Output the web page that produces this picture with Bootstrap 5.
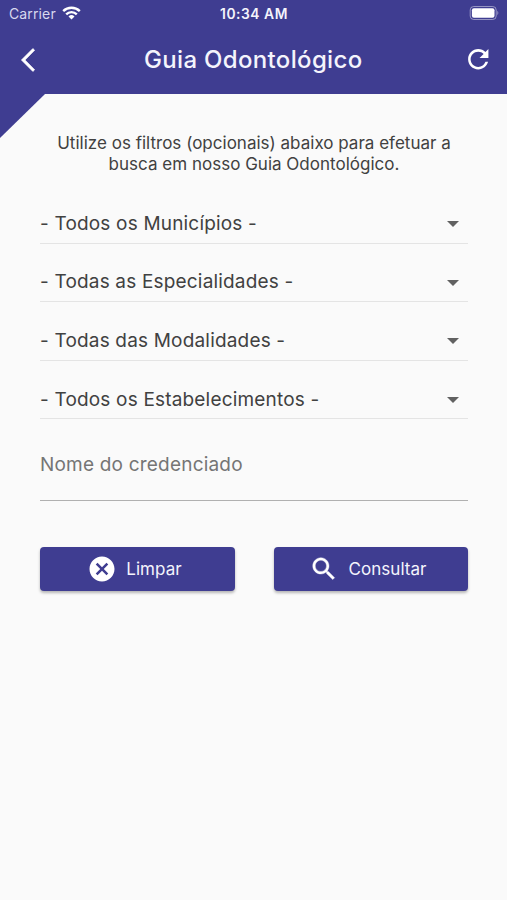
<!DOCTYPE html>
<html lang="pt-BR">
<head>
<meta charset="utf-8">
<meta name="viewport" content="width=device-width, initial-scale=1">
<title>Guia Odontológico</title>
<link href="https://cdn.jsdelivr.net/npm/bootstrap@5.3.0/dist/css/bootstrap.min.css" rel="stylesheet">
<style>
  :root { --brand: #3f3d91; }
  body { background: #fafafa; font-family: Inter, "Liberation Sans", sans-serif; color: #414141; min-height: 900px; overflow: hidden; }
  .app-header { background: var(--brand); height: 94px; color: #f4f4fc; }
  .status-bar { height: 27px; padding: 0 8px 0 9px; }
  .status-side { flex: 1 1 0; gap: 6px; }
  .status-side svg { margin-bottom: 1px; }
  .carrier { font-size: 14px; letter-spacing: .13px; color: #d8d8ee; }
  .clock { font-size: 13.8px; font-weight: 600; letter-spacing: .55px; padding-top: 1px; }
  .title-bar { height: 65px; padding: 0 13px 0 21px; }
  .title-bar h1 { font-size: 24px; font-weight: 500; letter-spacing: .33px; line-height: 1; padding-left: 8px; padding-top: 1px; }
  .corner { width: 45px; height: 44px; background: var(--brand); clip-path: polygon(0 0, 100% 0, 0 100%); }
  .content { padding: 0 39px 0 40px; margin-top: -5px; }
  .intro { font-size: 17px; line-height: 20.6px; letter-spacing: .01px; }
  .filters { padding-top: 31.4px; }
  .filter { height: 58.6px; }
  .filter-row { height: 38px; border-bottom: 1.4px solid #e4e4e4; font-size: 19px; letter-spacing: .18px; padding-right: 9px; }
  .name-field { height: 61px; border: 0; border-bottom: 1.5px solid #b0b0b0; border-radius: 0; background: transparent; font-size: 19px; letter-spacing: .2px; padding: 0 0 10px; }
  .name-field::placeholder { color: #757575; opacity: 1; }
  .action { --bs-btn-color: #f4f4fc; --bs-btn-bg: var(--brand); --bs-btn-hover-bg: #35337f; --bs-btn-hover-color: #fff; height: 44px; border: 0; border-radius: 4px; font-size: 17px; letter-spacing: .06px; box-shadow: 0 2px 3px rgba(0,0,0,.28); padding: 0 6px 0 0; gap: 9.5px; }
  .action span { padding-top: 1px; }
  .actions { gap: 39px; margin-top: 46px; }
</style>
<script src="https://cdn.jsdelivr.net/npm/bootstrap@5.3.0/dist/js/bootstrap.bundle.min.js"></script>
</head>
<body>
<header class="app-header">
  <div class="status-bar d-flex align-items-center">
    <div class="status-side d-flex align-items-center">
      <span class="carrier">Carrier</span>
      <svg width="19" height="14" viewBox="0 0 19 14" fill="none" stroke="#fff" stroke-width="2.4" aria-hidden="true">
        <path d="M1.2 5.1a11.8 11.8 0 0 1 16.6 0"/>
        <path d="M4.2 8.3a7.5 7.5 0 0 1 10.6 0"/>
        <path d="M9.5 13.6 6.5 10.5a4.3 4.3 0 0 1 6 0z" fill="#fff" stroke="none"/>
      </svg>
    </div>
    <span class="clock">10:34 AM</span>
    <div class="status-side d-flex justify-content-end">
      <svg width="30" height="14" viewBox="0 0 30 14" aria-hidden="true">
        <rect x="1.2" y=".5" width="26" height="13" rx="3.5" fill="none" stroke="#fff" stroke-opacity=".45"/>
        <rect x="2.9" y="2.2" width="22.6" height="9.6" rx="2" fill="#fff"/>
        <path d="M28.4 4.8q1.8 2.2 0 4.4z" fill="#fff" fill-opacity=".5"/>
      </svg>
    </div>
  </div>
  <div class="title-bar d-flex align-items-center justify-content-between">
    <svg width="14" height="24" viewBox="0 2.1 11.67 19.8" fill="#fff" stroke="#fff" stroke-width=".5" role="img" aria-label="Voltar"><path d="M11.4 3.87 9.9 2.4.3 12l9.6 9.6 1.5-1.47L3.4 12z"/></svg>
    <h1 class="m-0">Guia Odontológico</h1>
    <svg width="30.5" height="30.5" viewBox="0 0 24 24" fill="#fff" role="img" aria-label="Atualizar"><path d="M17.65 6.35C16.2 4.9 14.21 4 12 4c-4.42 0-7.99 3.58-7.99 8s3.57 8 7.99 8c3.73 0 6.84-2.55 7.73-6h-2.08c-.82 2.33-3.04 4-5.65 4-3.31 0-6-2.69-6-6s2.69-6 6-6c1.66 0 3.14.69 4.22 1.78L13 11h7V4z"/></svg>
  </div>
</header>
<div class="corner"></div>
<main class="content">
  <p class="intro text-center mb-0">Utilize os filtros (opcionais) abaixo para efetuar a<br>busca em nosso Guia Odontológico.</p>
  <div class="filters">
    <div class="filter"><div class="filter-row d-flex align-items-center justify-content-between"><span>- Todos os Municípios -</span><svg width="12" height="6" viewBox="0 0 12 6" fill="#616161"><path d="M0 0h12L6 6z"/></svg></div></div>
    <div class="filter"><div class="filter-row d-flex align-items-center justify-content-between"><span>- Todas as Especialidades -</span><svg width="12" height="6" viewBox="0 0 12 6" fill="#616161"><path d="M0 0h12L6 6z"/></svg></div></div>
    <div class="filter"><div class="filter-row d-flex align-items-center justify-content-between"><span>- Todas das Modalidades -</span><svg width="12" height="6" viewBox="0 0 12 6" fill="#616161"><path d="M0 0h12L6 6z"/></svg></div></div>
    <div class="filter"><div class="filter-row d-flex align-items-center justify-content-between"><span>- Todos os Estabelecimentos -</span><svg width="12" height="6" viewBox="0 0 12 6" fill="#616161"><path d="M0 0h12L6 6z"/></svg></div></div>
  </div>
  <input class="name-field form-control" type="text" placeholder="Nome do credenciado" aria-label="Nome do credenciado">
  <div class="actions d-flex">
    <button type="button" class="btn action flex-fill w-50 d-flex align-items-center justify-content-center">
      <svg width="30" height="30" viewBox="0 0 24 24" fill="#fff" aria-hidden="true"><path d="M12 2C6.47 2 2 6.47 2 12s4.47 10 10 10 10-4.47 10-10S17.53 2 12 2zm5 13.59L15.59 17 12 13.41 8.41 17 7 15.59 10.59 12 7 8.41 8.41 7 12 10.59 15.59 7 17 8.41 13.41 12z"/></svg>
      <span>Limpar</span>
    </button>
    <button type="button" class="btn action flex-fill w-50 d-flex align-items-center justify-content-center">
      <svg width="30" height="30" viewBox="0 0 24 24" fill="#fff" stroke="#fff" stroke-width=".3" aria-hidden="true"><path d="M15.5 14h-.79l-.28-.27C15.41 12.59 16 11.11 16 9.5 16 5.91 13.09 3 9.5 3S3 5.91 3 9.5 5.91 16 9.5 16c1.61 0 3.09-.59 4.23-1.57l.27.28v.79l5 4.99L20.49 19zm-6 0C7.01 14 5 11.99 5 9.5S7.01 5 9.5 5 14 7.01 14 9.5 11.99 14 9.5 14z"/></svg>
      <span>Consultar</span>
    </button>
  </div>
</main>
</body>
</html>
